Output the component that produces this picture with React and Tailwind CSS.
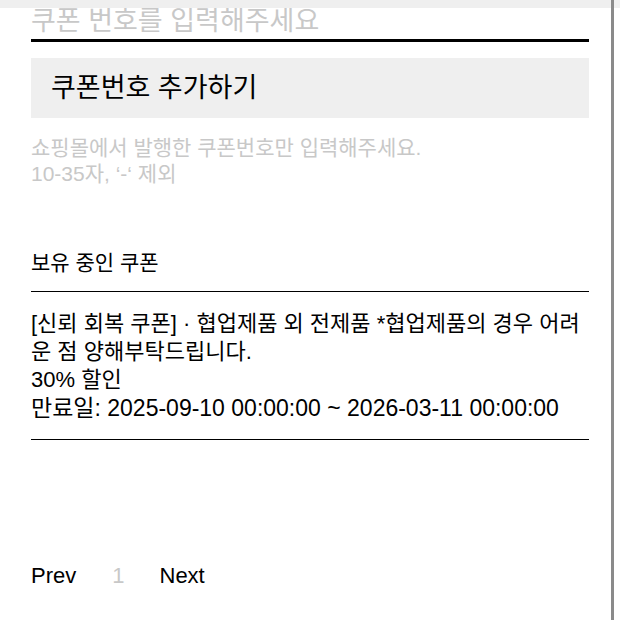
import React from "react";

const font = { fontFamily: '"Liberation Sans", "Noto Sans CJK KR", sans-serif' };

export default function App() {
  return (
    <div className="flex h-[620px] w-[620px] overflow-hidden bg-white" style={font}>
      <div className="flex w-[611px] flex-col">
        <div className="relative z-10 h-2 w-full bg-[#efefef]" />
        <div className="flex flex-col pl-[31px] pr-[22px]">
          <div className="-mt-[6px] h-[40px] border-b-[3px] border-black">
            <input
              className="w-full bg-transparent text-[27px] leading-[38px] text-black outline-none placeholder:text-[#c8c8c8]"
              placeholder="쿠폰 번호를 입력해주세요"
              style={font}
            />
          </div>
          <button
            className="mt-[16px] flex h-[60px] w-full items-center bg-[#efefef] pl-[20px] text-[27px] text-black"
            style={font}
          >
            쿠폰번호 추가하기
          </button>
          <div className="mt-[17px] text-[21px] leading-[26px] text-[#c8c8c8]">
            <p>쇼핑몰에서 발행한 쿠폰번호만 입력해주세요.</p>
            <p>10-35자, ‘-‘ 제외</p>
          </div>
          <h2 className="mt-[62px] pb-[15px] text-[21px] leading-[27px] text-black">보유 중인 쿠폰</h2>
          <div className="border-y border-black pb-[17px] pt-[18px] text-[22px] leading-[28px] text-black">
            <p>[신뢰 회복 쿠폰] · 협업제품 외 전제품 *협업제품의 경우 어려운 점 양해부탁드립니다.</p>
            <p>30% 할인</p>
            <p className="text-[23px]">만료일: 2025-09-10 00:00:00 ~ 2026-03-11 00:00:00</p>
          </div>
          <div className="mt-[119px] flex items-center text-[22px] text-black">
            <span>Prev</span>
            <span className="ml-[36px] text-[#c8c8c8]">1</span>
            <span className="ml-[35px]">Next</span>
          </div>
        </div>
      </div>
      <div className="h-full w-[3px] bg-[#8a8a8a]" />
      <div className="flex-1 flex-col">
        <div className="h-2 bg-[#efefef]" />
      </div>
    </div>
  );
}
